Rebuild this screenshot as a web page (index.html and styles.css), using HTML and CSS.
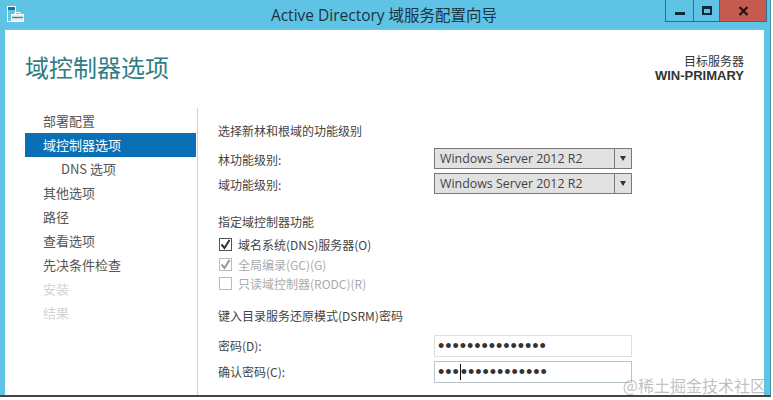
FILE: index.html
```html
<!DOCTYPE html>
<html lang="zh-CN">
<head>
  <meta charset="UTF-8" />
  <title>Active Directory 域服务配置向导</title>
  <link rel="stylesheet" href="styles.css">
</head>
<body>
  <div class="window">
    <div class="titlebar">
      <svg class="app-icon" width="17" height="17" viewBox="0 0 17 17">
        <rect x="0.5" y="0.5" width="8" height="15" fill="#5ec4e6" stroke="#fff"/>
        <rect x="1" y="1" width="7" height="3" fill="#1b6f9a"/>
        <rect x="4.5" y="8.5" width="12" height="7" fill="#e4eef2" stroke="#fff"/>
        <path d="M8 8.5V6.5h5v2" fill="none" stroke="#fff"/>
        <path d="M5 11.5h11" stroke="#4a7f96" stroke-width="1.4"/>
      </svg>
      <div class="title">Active Directory 域服务配置向导</div>
      <div class="controls">
        <div class="ctl"><span class="min"></span></div>
        <div class="ctl ctl-max"><span class="max"></span></div>
        <div class="ctl close">
          <svg width="11" height="10" viewBox="0 0 11 10"><path d="M1.5 1l8 8M9.5 1l-8 8" stroke="#2a1512" stroke-width="2.4"/></svg>
        </div>
      </div>
    </div>

    <div class="client">
      <div class="head">
        <h1>域控制器选项</h1>
        <div class="target">
          <div>目标服务器</div>
          <div class="server">WIN-PRIMARY</div>
        </div>
      </div>

      <div class="main">
        <ul class="steps">
          <li>部署配置</li>
          <li class="active">域控制器选项</li>
          <li class="sub">DNS 选项</li>
          <li>其他选项</li>
          <li>路径</li>
          <li>查看选项</li>
          <li>先决条件检查</li>
          <li class="off">安装</li>
          <li class="off">结果</li>
        </ul>

        <div class="form">
          <div class="label-row">选择新林和根域的功能级别</div>
          <div class="field-row">
            <label>林功能级别:</label>
            <div class="combo"><span>Windows Server 2012 R2</span><b class="arrow"></b></div>
          </div>
          <div class="field-row">
            <label>域功能级别:</label>
            <div class="combo"><span>Windows Server 2012 R2</span><b class="arrow"></b></div>
          </div>

          <div class="label-row section">指定域控制器功能</div>
          <div class="checks">
            <div class="check">
              <span class="box"><svg width="11" height="11" viewBox="0 0 11 11"><path d="M1.5 5.5l3 3.5 5-8" fill="none" stroke="#333" stroke-width="2"/></svg></span>域名系统(DNS)服务器(O)
            </div>
            <div class="check dim">
              <span class="box"><svg width="11" height="11" viewBox="0 0 11 11"><path d="M1.5 5.5l3 3.5 5-8" fill="none" stroke="#999" stroke-width="2"/></svg></span>全局编录(GC)(G)
            </div>
            <div class="check dim faint"><span class="box"></span>只读域控制器(RODC)(R)</div>
          </div>

          <div class="label-row section2">键入目录服务还原模式(DSRM)密码</div>
          <div class="field-row pw">
            <label>密码(D):</label>
            <div class="input"><span class="dots">•••••••••••••••</span></div>
          </div>
          <div class="field-row pw">
            <label>确认密码(C):</label>
            <div class="input focus"><span class="dots">•••</span><i class="caret"></i><span class="dots">••••••••••••</span></div>
          </div>
        </div>
      </div>
    </div>
  </div>
  <div class="watermark">@稀土掘金技术社区</div>
</body>
</html>
```

FILE: styles.css
```css
body {
  margin: 0;
  width: 773px;
  height: 400px;
  overflow: hidden;
  position: relative;
  background: #fff;
  font-family: "Noto Sans CJK SC", "Liberation Sans", sans-serif;
  color: #444;
}

.window {
  height: 397px;
  width: 771px;
  background: #5fc3e6;
  padding: 0 6px 0 5px;
  box-sizing: border-box;
  border-right: 1px solid #4a8fa8;
  border-bottom: 2px solid #444;
  display: flex;
  flex-direction: column;
}

.titlebar {
  height: 29px;
  flex-shrink: 0;
  display: flex;
  align-items: flex-start;
  position: relative;
}

.app-icon {
  margin: 6px 0 0 2px;
}

.title {
  position: absolute;
  left: -1px;
  right: 0;
  top: 3px;
  text-align: center;
  font-family: "Open Sans", "Noto Sans CJK SC", sans-serif;
  font-size: 15.5px;
  color: #1b3442;
}

.controls {
  margin-left: auto;
  display: flex;
  height: 21px;
  border: 1px solid #2f6f8c;
  border-top: 0;
  margin-right: -3px;
}

.ctl {
  width: 27px;
  display: flex;
  align-items: center;
  justify-content: center;
  border-right: 1px solid #2f6f8c;
}

.ctl-max {
  width: 25px;
}

.close {
  width: 46px;
  background: #c55a50;
  border-right: 0;
}

.min {
  width: 10px;
  height: 3px;
  margin-top: 5px;
  background: #0c2a3c;
}

.max {
  width: 6px;
  height: 4px;
  border: 2px solid #0c2a3c;
  border-top-width: 3px;
}

.client {
  flex: 1;
  background: #fff;
  border-top: 1px solid #8fb8c8;
  display: flex;
  flex-direction: column;
  min-height: 0;
}

.head {
  height: 78px;
  flex-shrink: 0;
  display: flex;
  justify-content: space-between;
  padding: 19px 20px 0 20px;
  box-sizing: border-box;
}

h1 {
  margin: 0;
  font-weight: 400;
  font-size: 24px;
  line-height: 36px;
  color: #2e7d86;
}

.target {
  text-align: right;
  font-size: 12px;
  line-height: 15px;
  padding-top: 4px;
  color: #333;
}

.server {
  font-family: "Liberation Sans", sans-serif;
  font-size: 13px;
  font-weight: 700;
}

.main {
  flex: 1;
  display: flex;
  min-height: 0;
}

.steps {
  list-style: none;
  margin: 1px 0 0 20px;
  padding: 0;
  width: 171px;
  font-size: 13px;
  color: #555;
}

.steps li {
  height: 24px;
  line-height: 24px;
  padding-left: 18px;
}

.steps .active {
  background: #0a6fb5;
  color: #fff;
}

.steps .sub {
  padding-left: 36px;
}

.steps .off {
  color: #d4d4d4;
}

.form {
  flex: 1;
  margin-left: 1px;
  border-left: 1px solid #cfcfcf;
  padding: 14px 0 0 20px;
  font-size: 12px;
  color: #444;
}

.label-row {
  height: 18px;
  line-height: 18px;
}

.field-row {
  display: flex;
  align-items: center;
  height: 25px;
}

.label-row + .field-row {
  margin-top: 7px;
}

.section2 + .field-row {
  margin-top: 8px;
}

.field-row label {
  width: 216px;
}

.combo {
  width: 198px;
  height: 21px;
  margin-bottom: 2px;
  box-sizing: border-box;
  background: #e1e1e1;
  border: 1px solid #777;
  display: flex;
  align-items: center;
  font-family: "Open Sans", "Liberation Sans", sans-serif;
  font-size: 12.4px;
  color: #444;
}

.combo span {
  flex: 1;
  padding-left: 5px;
  line-height: 19px;
  border-right: 1px solid #777;
}

.arrow {
  width: 16px;
  display: flex;
  justify-content: center;
}

.arrow::before {
  content: "";
  border: 3.5px solid transparent;
  border-top: 5px solid #333;
  border-bottom: 0;
}

.section {
  margin-top: 16px;
}

.checks {
  margin-top: 4px;
}

.check {
  display: flex;
  align-items: center;
  height: 19.5px;
  color: #444;
}

.check.dim {
  color: #aaa;
}

.box {
  width: 13px;
  height: 13px;
  box-sizing: border-box;
  border: 1px solid #555;
  margin-right: 6px;
  margin-left: 1px;
  display: flex;
  align-items: center;
  justify-content: center;
}

.dim .box {
  border-color: #bbb;
}

.section2 {
  margin-top: 13px;
}

.pw {
  height: 26px;
}

.input {
  width: 198px;
  height: 22px;
  box-sizing: border-box;
  border: 1px solid #dedede;
  display: flex;
  align-items: center;
  padding-left: 3px;
}

.input.focus {
  border-color: #b9c6cc;
}

.dots {
  font-family: "Liberation Sans", sans-serif;
  font-size: 18px;
  letter-spacing: 0.95px;
  line-height: 20px;
  color: #333;
}

.caret {
  width: 1px;
  height: 16px;
  background: #111;
}

.watermark {
  position: absolute;
  right: 7px;
  bottom: 3px;
  font-size: 16px;
  color: rgba(130, 130, 130, 0.5);
  font-family: "Noto Sans CJK SC", sans-serif;
}
```
